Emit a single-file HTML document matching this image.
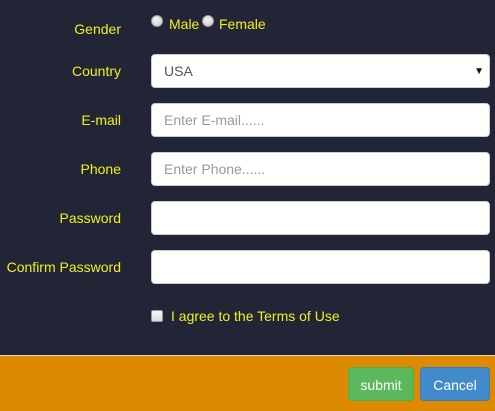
<!DOCTYPE html>
<html><head><meta charset="utf-8"><style>
*{box-sizing:border-box;margin:0;padding:0}
body{width:495px;height:411px;overflow:hidden;background:#222536;font-family:"Liberation Sans",sans-serif;font-size:14px;position:relative}
.lbl{position:absolute;right:374px;color:#f0f01e;font-size:14px;white-space:nowrap}
.in{position:absolute;left:151px;width:339px;height:34px;background:#fff;border-radius:4px;border:1px solid #ccc;color:#999;font-size:14px;padding:9px 12px;line-height:14px}
.radio{position:absolute;width:12px;height:12px;border-radius:50%;background:radial-gradient(circle at 40% 35%,#f4f4f4,#c8c8c8);border:1px solid #999}
.y{color:#f0f01e;position:absolute}
.footer{position:absolute;left:0;top:355px;width:495px;height:56px;background:#de8a00;border-top:1px solid #e8d8c0}
.btn{position:absolute;top:11px;height:34px;border-radius:4px;color:#fff;font-size:14px;text-align:center;line-height:34px}
</style></head><body>
<div class="lbl" style="top:21px">Gender</div>
<div class="radio" style="left:151px;top:15px"></div>
<div class="y" style="left:169px;top:16px">Male</div>
<div class="radio" style="left:202px;top:15px"></div>
<div class="y" style="left:219px;top:16px">Female</div>

<div class="lbl" style="top:63px">Country</div>
<div class="in" style="top:54px;color:#555">USA<span style="position:absolute;right:5px;top:10px;font-size:10px;color:#111">▼</span></div>

<div class="lbl" style="top:112px">E-mail</div>
<div class="in" style="top:103px">Enter E-mail......</div>

<div class="lbl" style="top:161px">Phone</div>
<div class="in" style="top:152px">Enter Phone......</div>

<div class="lbl" style="top:210px">Password</div>
<div class="in" style="top:201px"></div>

<div class="lbl" style="top:259px">Confirm Password</div>
<div class="in" style="top:250px"></div>

<div style="position:absolute;left:151px;top:310px;width:12px;height:12px;background:linear-gradient(#f6f6f6,#ddd);border:1px solid #999;border-radius:2px"></div>
<div class="y" style="left:171px;top:308px">I agree to the Terms of Use</div>

<div class="footer">
<div class="btn" style="left:348px;width:66px;background:#5cb85c;border:1px solid #4cae4c">submit</div>
<div class="btn" style="left:420px;width:70px;background:#428bca;border:1px solid #357ebd">Cancel</div>
</div>
</body></html>
